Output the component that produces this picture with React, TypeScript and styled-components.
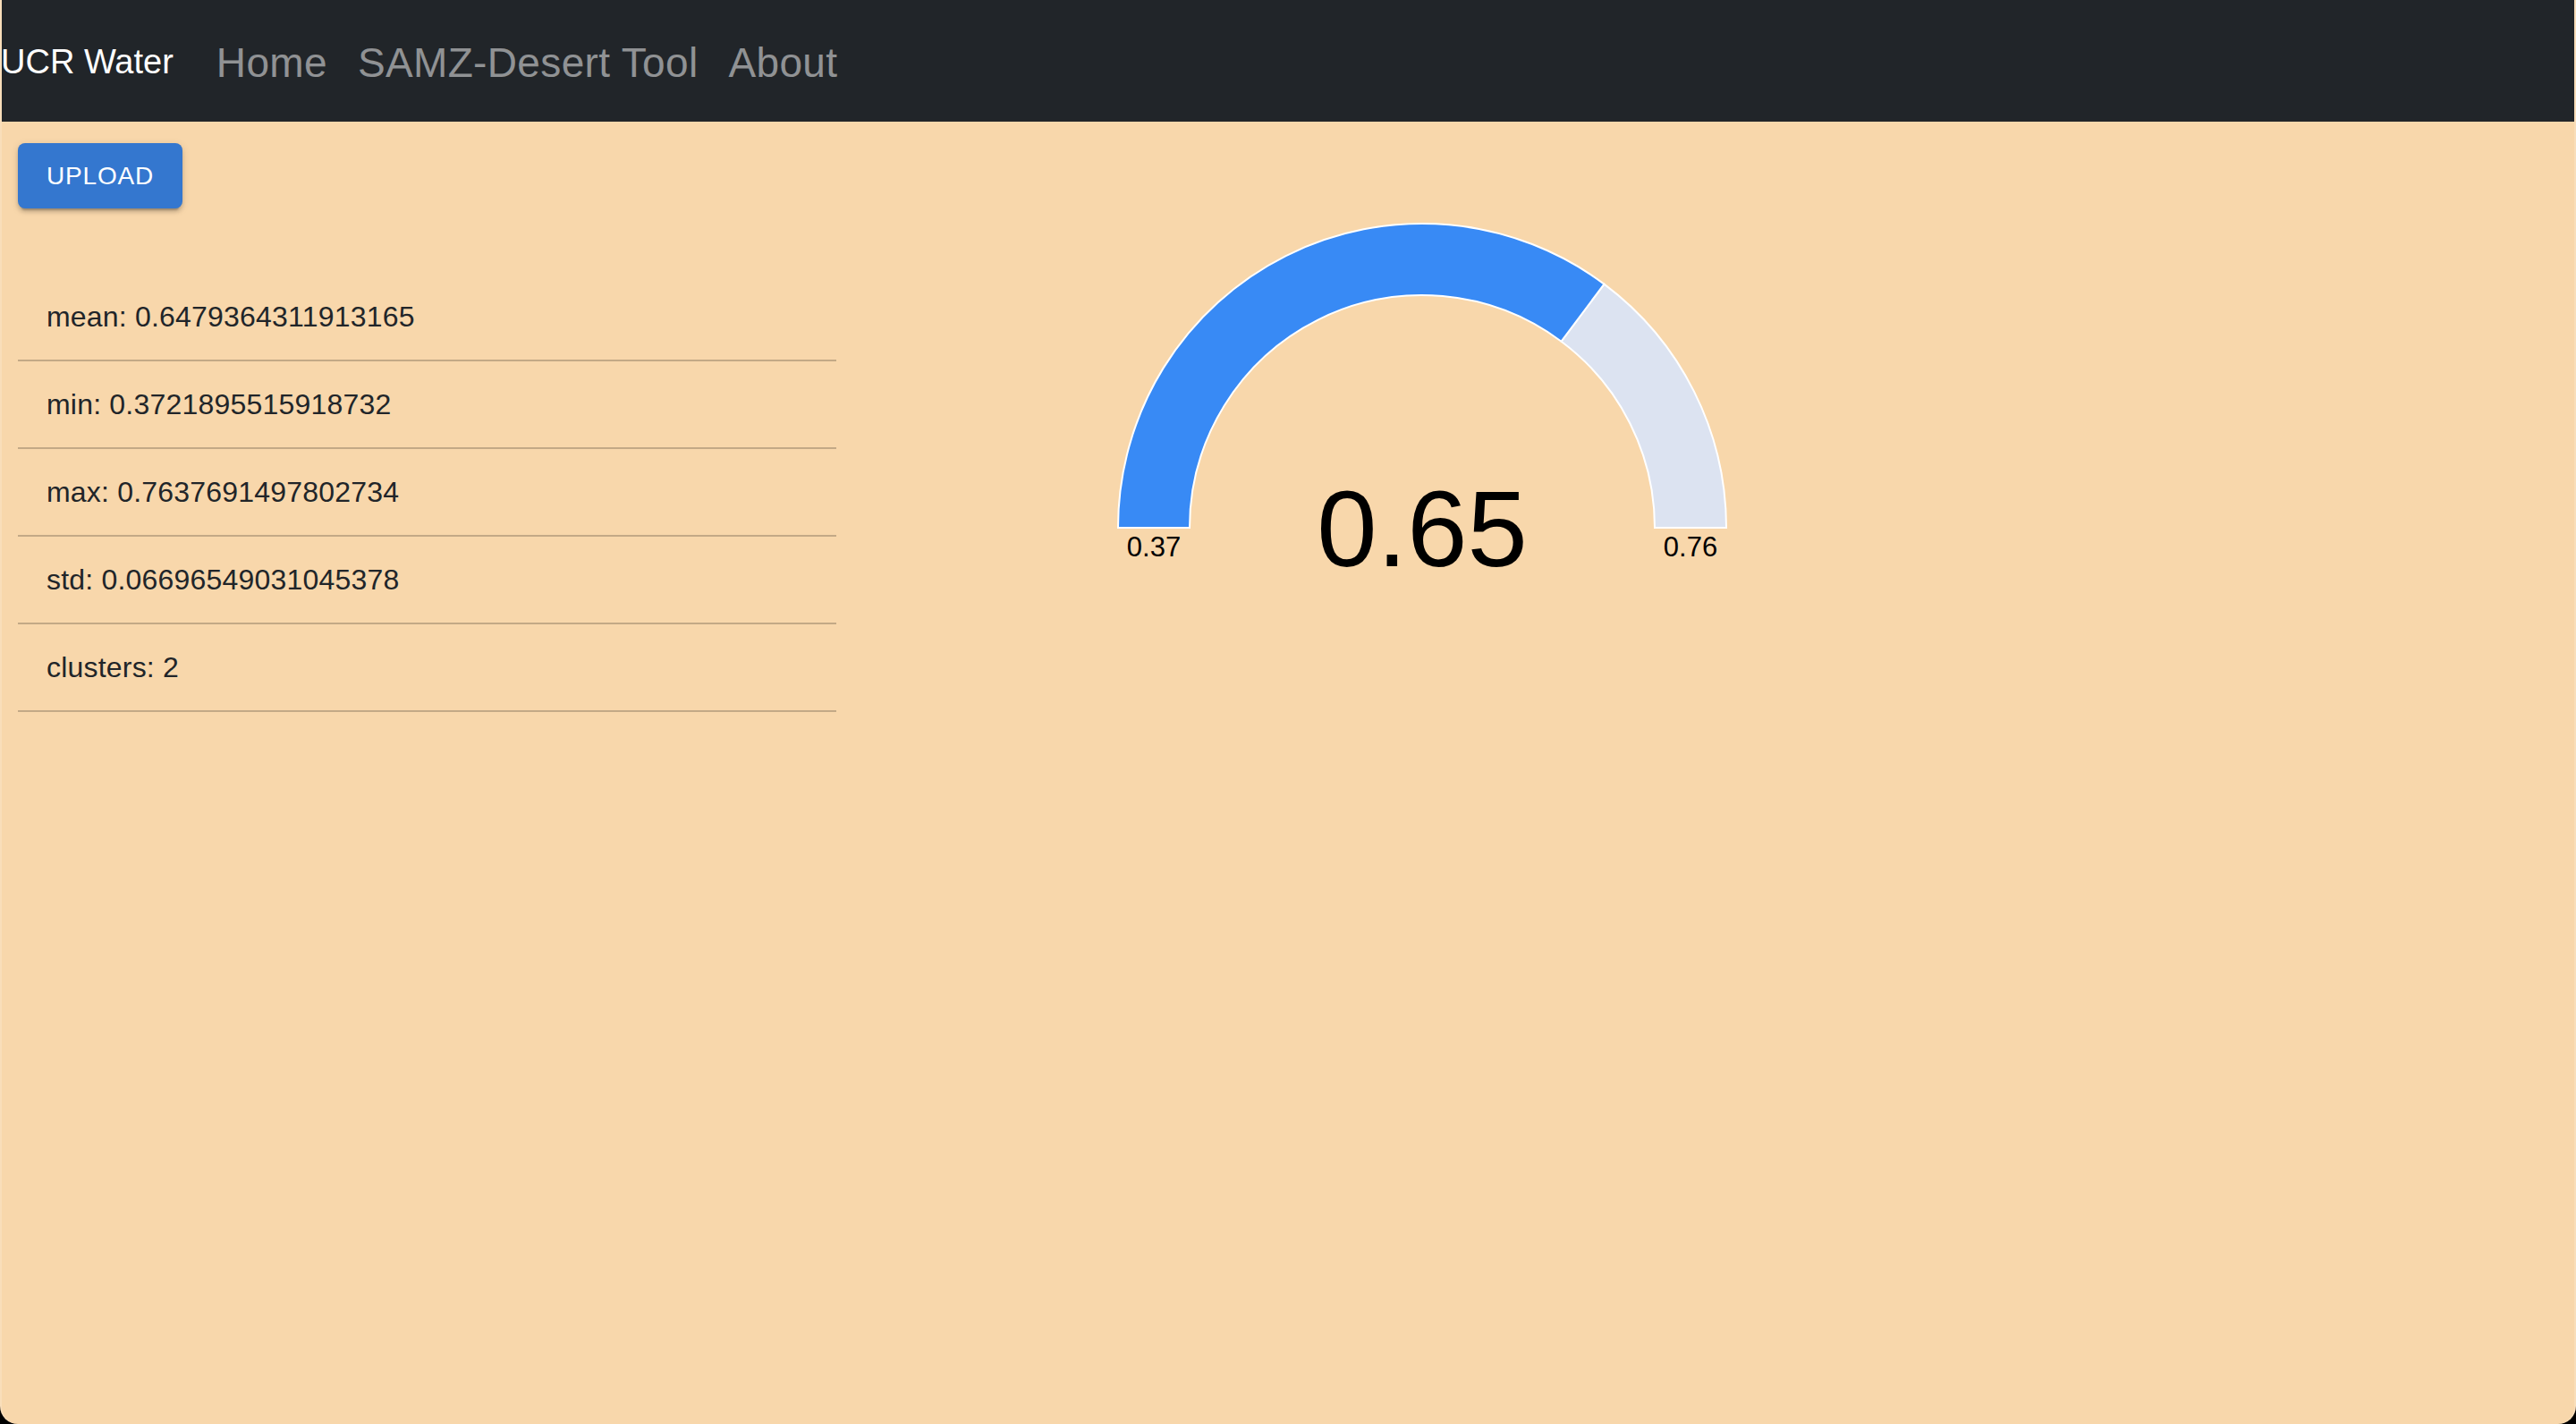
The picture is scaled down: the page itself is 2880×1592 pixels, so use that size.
import styled, { createGlobalStyle } from "styled-components";

const GlobalStyle = createGlobalStyle`
  html, body {
    margin: 0;
    padding: 0;
    background: #000;
  }
  body {
    font-family: "Liberation Sans", Arial, Helvetica, sans-serif;
    color: #212529;
  }
  * {
    box-sizing: border-box;
  }
`;

const Window = styled.div`
  height: 1592px;
  background-color: #f8d7ab;
  border-left: 2px solid rgba(255, 255, 255, 0.18);
  border-right: 2px solid rgba(255, 255, 255, 0.18);
  border-radius: 0 0 20px 20px;
  overflow: hidden;
`;

const NavBar = styled.nav`
  height: 136px;
  padding-top: 3px;
  background-color: #212529;
  display: flex;
  align-items: center;
  margin: 0 -2px;
`;

const Brand = styled.a`
  font-size: 38px;
  color: #fff;
  margin-right: 31px;
  text-decoration: none;
  padding-left: 1px;
`;

const NavLink = styled.a`
  font-size: 46px;
  letter-spacing: 0.35px;
  color: rgba(255, 255, 255, 0.5);
  padding: 0 17px;
  text-decoration: none;
`;

const Main = styled.main`
  padding: 24px 18px;
  display: grid;
  grid-template-columns: 915px 1fr;
  align-items: start;
`;

const LeftColumn = styled.div`
  display: flex;
  flex-direction: column;
  align-items: flex-start;
`;

const UploadButton = styled.button`
  border: 0;
  border-radius: 8px;
  background-color: #3477cf;
  color: #fff;
  font-family: inherit;
  font-size: 28px;
  letter-spacing: 0.8px;
  line-height: 49px;
  padding: 12px 32px;
  width: 184px;
  text-transform: uppercase;
  box-shadow: 0px 6px 2px -4px rgba(0, 0, 0, 0.2),
    0px 4px 4px 0px rgba(0, 0, 0, 0.14), 0px 2px 10px 0px rgba(0, 0, 0, 0.12);
  cursor: pointer;
`;

const StatsList = styled.ul`
  list-style: none;
  margin: 57px 0 0;
  padding: 16px 0 0;
  width: 100%;
`;

const StatItem = styled.li`
  padding: 24px 32px;
  font-size: 32px;
  letter-spacing: 0.2px;
  line-height: 48px;
  border-bottom: 2px solid #c3a986;
`;

const GaugeColumn = styled.div`
  padding: 70px 0 0 285px;
`;

const GaugeSvg = styled.svg`
  display: block;
  overflow: visible;
`;

const stats = {
  mean: 0.6479364311913165,
  min: 0.3721895515918732,
  max: 0.7637691497802734,
  std: 0.06696549031045378,
  clusters: 2,
};

const cx = 370;
const cy = 360;
const outerR = 340;
const innerR = 260;

const point = (r: number, t: number) => {
  const a = Math.PI * (1 - t);
  return [cx + r * Math.cos(a), cy - r * Math.sin(a)];
};

const sector = (t0: number, t1: number) => {
  const [ox0, oy0] = point(outerR, t0);
  const [ox1, oy1] = point(outerR, t1);
  const [ix1, iy1] = point(innerR, t1);
  const [ix0, iy0] = point(innerR, t0);
  return `M ${ox0} ${oy0} A ${outerR} ${outerR} 0 0 1 ${ox1} ${oy1} L ${ix1} ${iy1} A ${innerR} ${innerR} 0 0 0 ${ix0} ${iy0} Z`;
};

const font = "Liberation Sans, Arial, sans-serif";

const Gauge = ({ value, min, max }: { value: number; min: number; max: number }) => {
  const t = (value - min) / (max - min);
  return (
    <GaugeSvg width={740} height={440} viewBox="0 0 740 440">
      <path d={sector(t, 1)} fill="#dce3f1" stroke="#fff" strokeWidth={2} />
      <path d={sector(0, t)} fill="#388af5" stroke="#fff" strokeWidth={2} />
      <text x={70} y={392} textAnchor="middle" fontSize={31} fontFamily={font} fill="#000">
        {min.toFixed(2)}
      </text>
      <text x={670} y={392} textAnchor="middle" fontSize={31} fontFamily={font} fill="#000">
        {max.toFixed(2)}
      </text>
      <text x={cx} y={403} textAnchor="middle" fontSize={121} fontFamily={font} fill="#000">
        {value.toFixed(2)}
      </text>
    </GaugeSvg>
  );
};

export default function App() {
  return (
    <Window>
      <GlobalStyle />
      <NavBar>
        <Brand>UCR Water</Brand>
        <NavLink>Home</NavLink>
        <NavLink>SAMZ-Desert Tool</NavLink>
        <NavLink>About</NavLink>
      </NavBar>
      <Main>
        <LeftColumn>
          <UploadButton>Upload</UploadButton>
          <StatsList>
            <StatItem>mean: {stats.mean}</StatItem>
            <StatItem>min: {stats.min}</StatItem>
            <StatItem>max: {stats.max}</StatItem>
            <StatItem>std: {stats.std}</StatItem>
            <StatItem>clusters: {stats.clusters}</StatItem>
          </StatsList>
        </LeftColumn>
        <GaugeColumn>
          <Gauge value={stats.mean} min={stats.min} max={stats.max} />
        </GaugeColumn>
      </Main>
    </Window>
  );
}
